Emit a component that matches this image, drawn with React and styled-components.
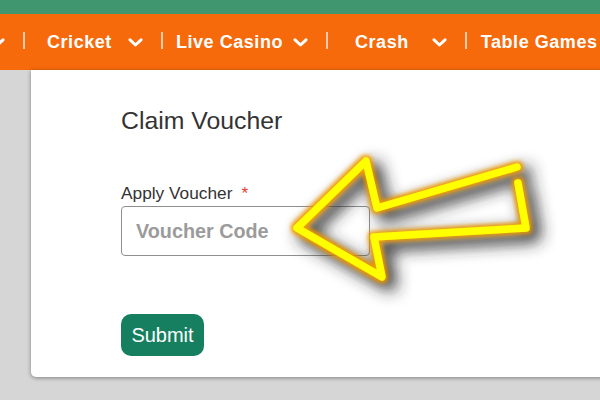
import React from 'react';
import styled, { createGlobalStyle } from 'styled-components';

const GlobalStyle = createGlobalStyle`
  html, body {
    margin: 0;
    padding: 0;
  }
  body {
    font-family: 'Liberation Sans', Arial, sans-serif;
    background: #d6d6d6;
    overflow: hidden;
  }
`;

const navItems = [
  { label: 'Cricket', lead: 22, gap: 16 },
  { label: 'Live Casino', lead: 13, gap: 10 },
  { label: 'Crash', lead: 27, gap: 23 },
  { label: 'Table Games', lead: 14, gap: 16 },
];

function Chevron() {
  return (
    <ChevronIcon viewBox="0 0 15 9" width="15" height="9">
      <polyline points="2,1.8 7.5,7 13,1.8" fill="none" stroke="#fff" strokeWidth="3" strokeLinecap="round" strokeLinejoin="round" />
    </ChevronIcon>
  );
}

function Arrow() {
  const d = 'M517,167 L377,208 L366,161 L297,228 L382,277 L374,237 L526,228 L518,183';
  return (
    <ArrowLayer viewBox="0 0 600 400" width="600" height="400">
      <defs>
        <filter id="haze" x="-40%" y="-50%" width="180%" height="200%">
          <feGaussianBlur in="SourceAlpha" stdDeviation="8" />
          <feOffset dx="8" dy="7" result="blur" />
          <feFlood floodColor="#2a2a2a" floodOpacity="0.95" />
          <feComposite in2="blur" operator="in" />
        </filter>
        <filter id="glow" x="-20%" y="-30%" width="140%" height="160%">
          <feMorphology in="SourceAlpha" operator="dilate" radius="2.2" />
          <feGaussianBlur stdDeviation="2" result="wide" />
          <feFlood floodColor="#f29a00" />
          <feComposite in2="wide" operator="in" result="halo" />
          <feMerge>
            <feMergeNode in="halo" />
            <feMergeNode in="SourceGraphic" />
          </feMerge>
        </filter>
      </defs>
      <path d={d} fill="none" stroke="#000" strokeWidth="14" strokeLinejoin="round" strokeLinecap="round" filter="url(#haze)" />
      <path d={d} fill="none" stroke="#ffff00" strokeWidth="7.5" strokeLinejoin="round" strokeLinecap="round" filter="url(#glow)" />
    </ArrowLayer>
  );
}

export default function App() {
  return (
    <Page>
      <GlobalStyle />
      <TopStrip />
      <NavBar>
        <NavList>
          <Chevron />
          {navItems.map(item => (
            <React.Fragment key={item.label}>
              <Divider />
              <NavItem $lead={item.lead} $gap={item.gap}>
                <NavLabel>{item.label}</NavLabel>
                {item.label !== 'Table Games' && <Chevron />}
              </NavItem>
            </React.Fragment>
          ))}
        </NavList>
      </NavBar>
      <Main>
        <Card>
          <Title>Claim Voucher</Title>
          <FieldLabel>
            Apply Voucher<Required>*</Required>
          </FieldLabel>
          <VoucherInput placeholder="Voucher Code" />
          <SubmitButton>Submit</SubmitButton>
        </Card>
      </Main>
      <Arrow />
    </Page>
  );
}

const Page = styled.div`
  position: relative;
  width: 600px;
  height: 400px;
  overflow: hidden;
  display: flex;
  flex-direction: column;
  background: #d6d6d6;
`;

const TopStrip = styled.div`
  height: 14px;
  background: #40966e;
`;

const NavBar = styled.nav`
  height: 56px;
  background: #f66a0b;
  display: flex;
  align-items: center;
  overflow: hidden;
`;

const NavList = styled.div`
  display: flex;
  align-items: center;
  margin-left: -10px;
  white-space: nowrap;
`;

const ChevronIcon = styled.svg`
  display: block;
  flex-shrink: 0;
  margin-top: 1px;
`;

const Divider = styled.span`
  width: 2px;
  height: 17px;
  margin-left: 18px;
  margin-bottom: 4px;
  background: rgba(255, 255, 255, 0.65);
  flex-shrink: 0;
`;

const NavItem = styled.div`
  display: flex;
  align-items: center;
  padding-left: ${props => props.$lead}px;
  gap: ${props => props.$gap}px;
`;

const NavLabel = styled.span`
  color: #fff;
  font-size: 18px;
  font-weight: 700;
  letter-spacing: 0.55px;
  line-height: 22px;
`;

const Main = styled.div`
  flex: 1;
  display: flex;
  align-items: flex-start;
  padding-left: 31px;
`;

const Card = styled.div`
  flex: 1;
  margin-right: -20px;
  height: 307px;
  box-sizing: border-box;
  background: #fff;
  border-radius: 0 0 5px 5px;
  box-shadow: 0 1px 4px rgba(0, 0, 0, 0.4);
  padding: 37px 0 0 90px;
  display: flex;
  flex-direction: column;
  align-items: flex-start;
`;

const Title = styled.h2`
  margin: 0;
  font-size: 24.8px;
  line-height: 28px;
  font-weight: 400;
  color: #333;
`;

const FieldLabel = styled.label`
  margin-top: 48px;
  font-size: 17.3px;
  line-height: 20px;
  color: #333;
`;

const Required = styled.span`
  color: #e23b3b;
  margin-left: 9px;
`;

const VoucherInput = styled.input`
  margin-top: 3px;
  width: 249px;
  height: 50px;
  box-sizing: border-box;
  border: 1px solid #8f8f8f;
  border-radius: 4px;
  padding: 0 14px;
  font-family: 'Liberation Sans', Arial, sans-serif;
  font-size: 19.8px;
  font-weight: 700;
  color: #333;
  outline: none;

  &::placeholder {
    color: #9b9b9b;
  }
`;

const SubmitButton = styled.button`
  margin-top: 58px;
  width: 83px;
  height: 42px;
  border: none;
  border-radius: 10px;
  background: #167f5f;
  color: #fff;
  font-family: 'Liberation Sans', Arial, sans-serif;
  font-size: 20px;
  padding: 0;
  cursor: pointer;
`;

const ArrowLayer = styled.svg`
  position: absolute;
  left: 0;
  top: 0;
  pointer-events: none;
`;
